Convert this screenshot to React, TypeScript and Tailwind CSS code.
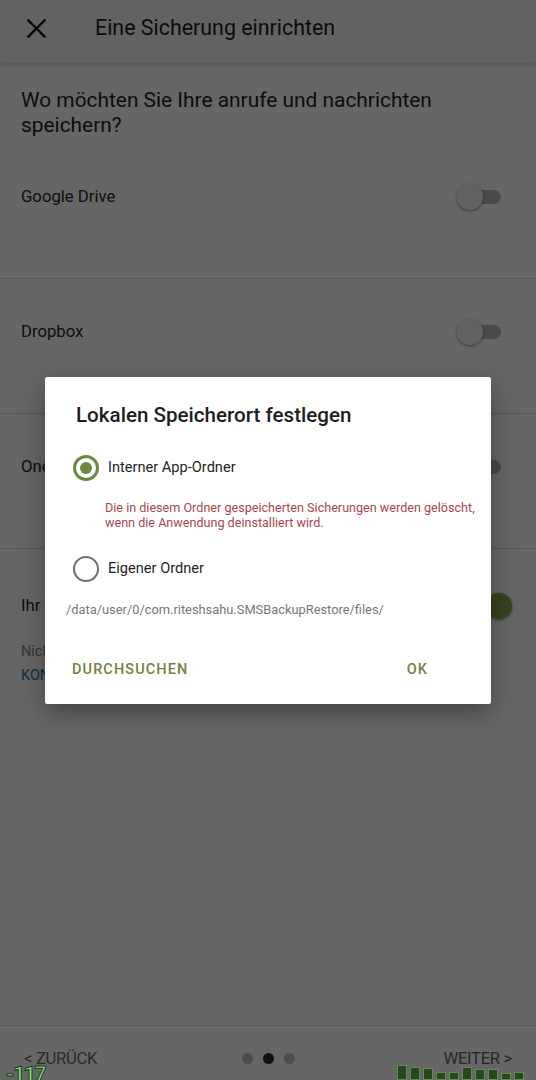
import React from 'react'

const font = { fontFamily: 'Roboto, "Noto Sans", sans-serif' }

function Toggle({ on }: { on?: boolean }) {
  return (
    <div className="relative h-[26px] w-[44px]">
      <div className={`absolute left-[9px] top-[6px] h-[14px] w-[35px] rounded-full ${on ? 'bg-[#a5c27a]' : 'bg-[#b9b9b9]'}`} />
      <div
        className={`absolute top-0 h-[26px] w-[26px] rounded-full shadow-[0_1px_3px_rgba(0,0,0,0.45)] ${on ? 'left-[29px] bg-[#8aa84a]' : 'left-0 bg-[#f4f4f4]'}`}
      />
    </div>
  )
}

function Row({ label }: { label: string }) {
  return (
    <div className="h-[135px] border-b border-[#d6d6d6] px-[21px] pt-[40px]">
      <div className="flex items-center justify-between pr-[14px]">
        <span className="text-[16.7px] leading-[22px] text-[#262626]">{label}</span>
        <Toggle />
      </div>
    </div>
  )
}

const bars = [15, 13, 12, 8, 8, 13, 11, 11, 7, 8]

export default function App() {
  return (
    <div className="relative h-[1080px] w-[536px] overflow-hidden bg-white" style={font}>
      {/* page under the dialog */}
      <div className="flex h-full flex-col">
        <header className="flex h-[63px] items-center bg-[#f5f5f5] pb-[7px] shadow-[0_2px_4px_rgba(0,0,0,0.15)]">
          <svg className="ml-[27px]" width="19" height="19" viewBox="0 0 19 19" fill="none" stroke="#111" strokeWidth="2.4" strokeLinecap="square">
            <path d="M1.5 1.5l16 16M17.5 1.5l-16 16" />
          </svg>
          <h1 className="ml-[49px] text-[21.4px] text-[#1c1c1c]">Eine Sicherung einrichten</h1>
        </header>

        <main className="flex-1">
          <h2 className="mt-[25px] px-[21px] text-[20.9px] leading-[25px] text-[#1f1f1f]">
            Wo möchten Sie Ihre anrufe und nachrichten speichern?
          </h2>
          <div className="mt-[6px]">
            <Row label="Google Drive" />
            <Row label="Dropbox" />
            <Row label="OneDrive" />
            <div className="h-[135px] px-[21px] pt-[44px]">
              <div className="flex items-center justify-between pr-[14px]">
                <span className="text-[16.7px] leading-[22px] text-[#262626]">Ihr Telefon</span>
                <Toggle on />
              </div>
              <p className="mt-[24px] text-[14.5px] leading-[18px] text-[#8a8a8a]">Nicht konfiguriert</p>
              <p className="mt-[6px] text-[14.5px] leading-[18px] text-[#2a6fa8]">KONFIGURIEREN</p>
            </div>
          </div>
        </main>

        <footer className="grid h-[55px] grid-cols-3 items-center border-t border-[#d6d6d6] px-[24px] pt-[11px]">
          <span className="text-[16.7px] tracking-[-0.02em] text-[#6a6a6a]">&lt; ZURÜCK</span>
          <div className="flex items-center justify-center gap-[10px] pl-[2px]">
            <span className="h-[11px] w-[11px] rounded-full bg-[#bdbdbd]" />
            <span className="h-[11px] w-[11px] rounded-full bg-[#2a2a2a]" />
            <span className="h-[11px] w-[11px] rounded-full bg-[#bdbdbd]" />
          </div>
          <span className="justify-self-end text-[16.7px] tracking-[-0.02em] text-[#626262]">WEITER &gt;</span>
        </footer>
      </div>

      {/* scrim */}
      <div className="absolute inset-0 bg-black/60" />

      {/* dialog */}
      <div className="absolute left-[45px] top-[377px] h-[327px] w-[446px] rounded-[2px] bg-white pt-[26px] shadow-[0_8px_24px_rgba(0,0,0,0.35)]">
        <h3 className="pl-[31px] text-[20.6px] font-medium leading-[24px] text-[#1e1e1e]">Lokalen Speicherort festlegen</h3>

        <div className="mt-[28px] flex items-center pl-[28px]">
          <span className="flex h-[26px] w-[26px] items-center justify-center rounded-full border-[3px] border-[#6b8a3d]">
            <span className="h-[12px] w-[12px] rounded-full bg-[#6b8a3d]" />
          </span>
          <span className="ml-[9px] text-[14.6px] text-[#1f1f1f]">Interner App-Ordner</span>
        </div>
        <p className="mt-[19px] pl-[60px] pr-[10px] text-[12.6px] leading-[15px] text-[#a9464f]">
          Die in diesem Ordner gespeicherten Sicherungen werden gelöscht, wenn die Anwendung deinstalliert wird.
        </p>

        <div className="mt-[26px] flex items-center pl-[28px]">
          <span className="h-[26px] w-[26px] rounded-full border-[2.5px] border-[#707070]" />
          <span className="ml-[9px] text-[14.6px] text-[#1f1f1f]">Eigener Ordner</span>
        </div>

        <p className="mt-[20px] pl-[21px] text-[12.85px] leading-[16px] text-[#777]">
          /data/user/0/com.riteshsahu.SMSBackupRestore/files/
        </p>

        <div className="mt-[34px] flex h-[36px] items-center justify-between pl-[27px] pr-[63px]">
          <span className="text-[14.5px] font-medium tracking-[0.075em] text-[#6f8440]">DURCHSUCHEN</span>
          <span className="text-[14.5px] font-medium tracking-[0.075em] text-[#6f8440]">OK</span>
        </div>
      </div>

      {/* debug overlays */}
      <span
        className="absolute left-[6px] top-[1062px] text-[21px] font-bold leading-[24px] tracking-[-0.06em] text-[#7fe07a]"
        style={{ WebkitTextStroke: '1px #1d3a1a' }}
      >
        -117
      </span>
      <div className="absolute bottom-0 left-[397px] flex items-end gap-[3px]">
        {bars.map((h, i) => (
          <div key={i} className="w-[10px] border border-[#5d8c55] bg-[#29461f]" style={{ height: h }} />
        ))}
      </div>
    </div>
  )
}
